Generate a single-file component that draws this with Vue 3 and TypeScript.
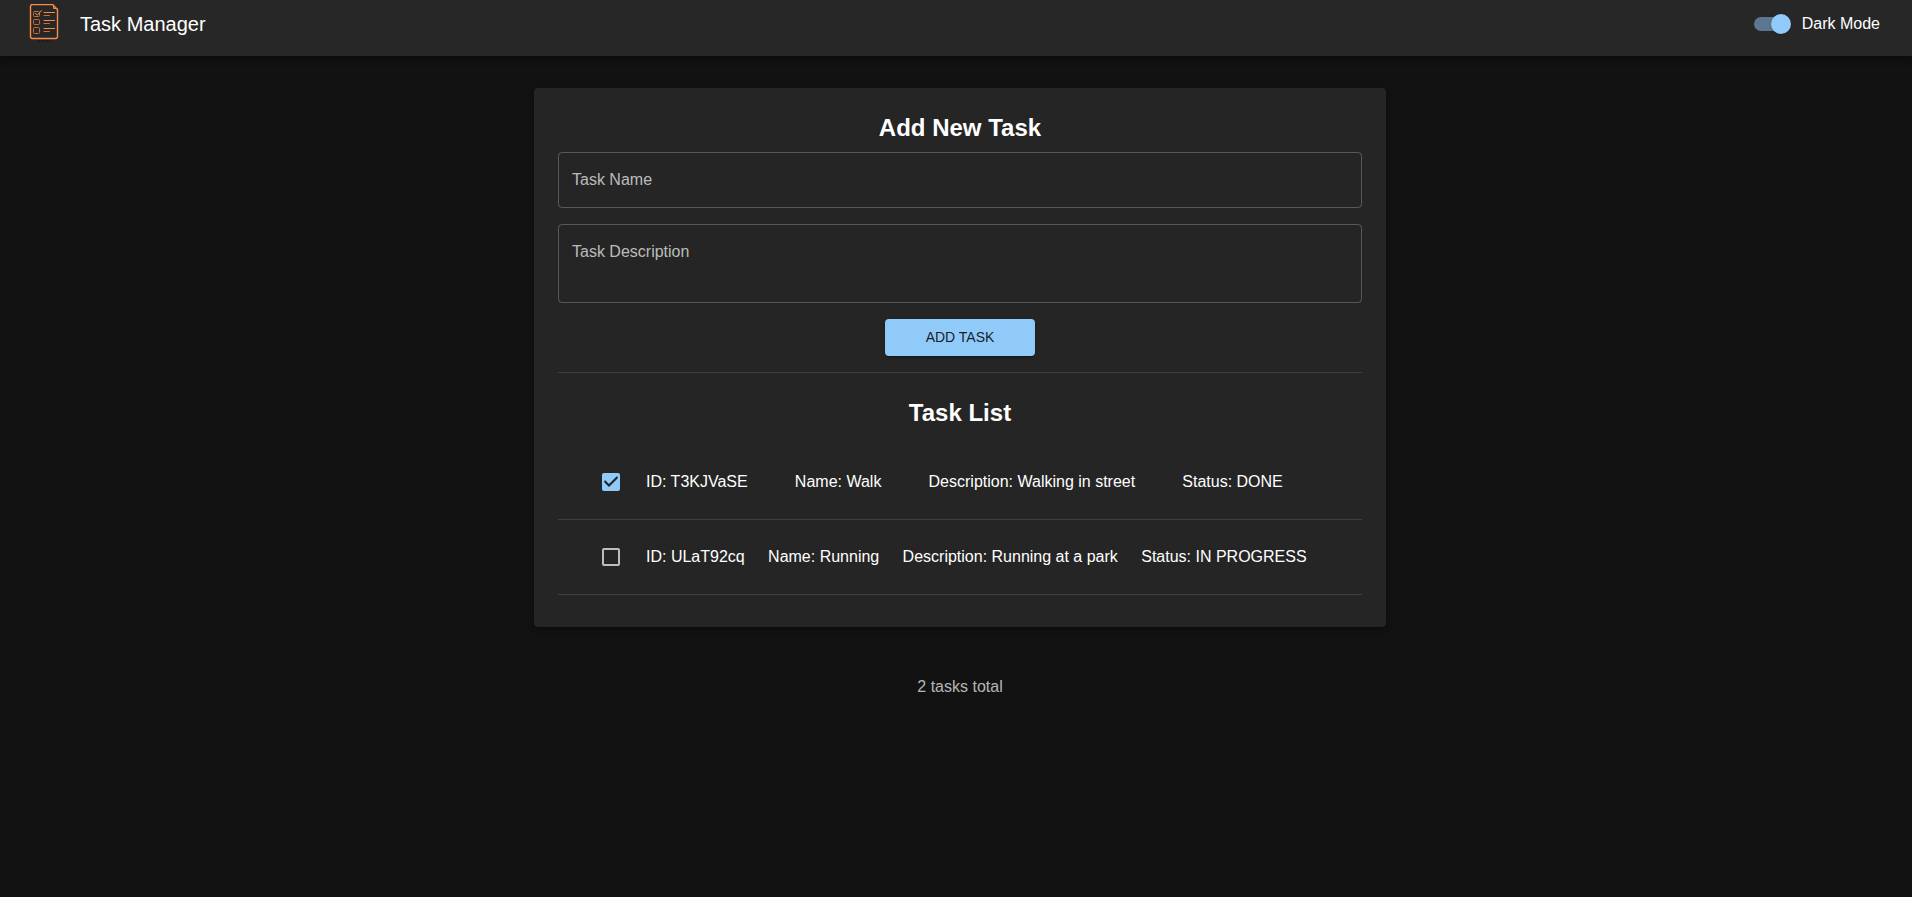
<script setup lang="ts">
import { computed, ref } from 'vue'

interface Task {
  id: string
  name: string
  description: string
  done: boolean
}

const darkMode = ref(true)
const taskName = ref('')
const taskDescription = ref('')
const tasks = ref<Task[]>([
  { id: 'T3KJVaSE', name: 'Walk', description: 'Walking in street', done: true },
  { id: 'ULaT92cq', name: 'Running', description: 'Running at a park', done: false },
])

const total = computed(() => `${tasks.value.length} tasks total`)

function addTask(): void {
  const name = taskName.value.trim()
  if (!name) return
  tasks.value.push({
    id: Math.random().toString(36).slice(2, 10),
    name,
    description: taskDescription.value.trim(),
    done: false,
  })
  taskName.value = ''
  taskDescription.value = ''
}
</script>

<template>
  <div class="app" :class="{ light: !darkMode }">
    <header class="bar">
      <svg class="logo" viewBox="0 2 32 40" width="32" height="40" fill="none" aria-hidden="true">
        <g stroke="#f98b48" stroke-linecap="round" stroke-linejoin="round">
          <path stroke-width="1.4" d="M4.5 2.5H24.5L29.5 7.5V34.5Q29.5 36.5 27.5 36.5H4.5Q2.5 36.5 2.5 34.5V4.5Q2.5 2.5 4.5 2.5Z" />
          <path d="M25.5 3V6.5H29" />
          <g stroke="#c96b38">
            <rect x="5.5" y="9.5" width="6" height="5" rx="1" />
            <rect x="5.5" y="17.5" width="6" height="5" rx="1" />
            <rect x="5.5" y="25.5" width="6" height="6" rx="1" />
            <path d="M16 13.5H21.5M16 21.5H21.5M16 29.5H21.5" />
          </g>
          <path d="M7.5 11.5L9.5 13L13.5 8.5M16 10.5H26.5M16 18.5H26.5M16 26.5H26.5" />
        </g>
        <path d="M9 39H23" stroke="#151515" stroke-dasharray="3 1" />
      </svg>
      <h1 class="title">Task Manager</h1>
      <label class="mode">
        <input v-model="darkMode" class="switch" type="checkbox" role="switch" />
        <span>Dark Mode</span>
      </label>
    </header>

    <main class="content">
      <section class="card">
        <h2 class="heading">Add New Task</h2>
        <form class="form" @submit.prevent="addTask">
          <div class="field">
            <input id="task-name" v-model="taskName" class="control" type="text" />
            <label v-show="!taskName" class="hint" for="task-name">Task Name</label>
          </div>
          <div class="field">
            <textarea id="task-description" v-model="taskDescription" class="control area" rows="2"></textarea>
            <label v-show="!taskDescription" class="hint" for="task-description">Task Description</label>
          </div>
          <button class="add" type="submit">ADD TASK</button>
        </form>
        <hr class="rule" />
        <h2 class="heading">Task List</h2>
        <ul class="list">
          <li v-for="task in tasks" :key="task.id" class="row">
            <input :id="`done-${task.id}`" v-model="task.done" class="check" type="checkbox" />
            <label class="details" :for="`done-${task.id}`">
              <span>ID: {{ task.id }}</span>
              <span>Name: {{ task.name }}</span>
              <span>Description: {{ task.description }}</span>
              <span>Status: {{ task.done ? 'DONE' : 'IN PROGRESS' }}</span>
            </label>
          </li>
        </ul>
      </section>
      <p class="total">{{ total }}</p>
    </main>
  </div>
</template>

<style>
body {
  margin: 0;
  background: #121212;
}
</style>

<style scoped>
.app {
  --page: #121212;
  --bar: #272727;
  --card: #252525;
  --text: #fff;
  --muted: rgba(255, 255, 255, 0.7);
  --outline: rgba(255, 255, 255, 0.23);
  --divider: rgba(255, 255, 255, 0.12);
  --accent: #90caf9;
  --on-accent: rgba(0, 0, 0, 0.87);
  min-height: 100vh;
  background: var(--page);
  color: var(--text);
  font: 16px/24px "Liberation Sans", Arial, sans-serif;
}

.app.light {
  --page: #fff;
  --bar: #1976d2;
  --card: #fff;
  --text: #212121;
  --muted: rgba(0, 0, 0, 0.6);
  --outline: rgba(0, 0, 0, 0.23);
  --divider: rgba(0, 0, 0, 0.12);
}

.app *,
.app {
  box-sizing: border-box;
}

.bar {
  display: flex;
  align-items: center;
  min-height: 56px;
  padding: 0 32px 8px 28px;
  background: var(--bar);
  box-shadow: 0 2px 4px -1px rgba(0, 0, 0, 0.2), 0 4px 5px rgba(0, 0, 0, 0.14), 0 1px 10px rgba(0, 0, 0, 0.12);
  color: #fff;
}

.logo {
  flex: none;
  margin-right: 20px;
}

.title {
  flex: 1;
  margin: 0;
  font-size: 20px;
  font-weight: 500;
  line-height: 32px;
}

.mode {
  display: flex;
  align-items: center;
  gap: 14px;
  cursor: pointer;
}

.switch {
  appearance: none;
  display: flex;
  align-items: center;
  width: 34px;
  height: 14px;
  margin: 0;
  border-radius: 7px;
  background: rgba(255, 255, 255, 0.3);
  cursor: pointer;
}

.switch::before {
  content: "";
  flex: none;
  width: 20px;
  height: 20px;
  margin-left: -3px;
  border-radius: 50%;
  background: #e0e0e0;
  box-shadow: 0 1px 3px rgba(0, 0, 0, 0.2);
}

.switch:checked {
  background: rgba(144, 202, 249, 0.5);
}

.switch:checked::before {
  margin-left: 17px;
  background: var(--accent);
}

.content {
  display: flex;
  flex-direction: column;
  align-items: center;
  padding: 32px 0 24px 8px;
}

.card {
  width: 100%;
  max-width: 852px;
  padding: 24px;
  border-radius: 4px;
  background: var(--card);
  box-shadow: 0 3px 3px -2px rgba(0, 0, 0, 0.2), 0 3px 4px rgba(0, 0, 0, 0.14), 0 1px 8px rgba(0, 0, 0, 0.12);
}

.heading {
  margin: 0 0 8px;
  font-size: 24px;
  font-weight: 700;
  line-height: 32px;
  text-align: center;
}

.form {
  display: flex;
  flex-direction: column;
  align-items: center;
  gap: 16px;
}

.field {
  display: grid;
  width: 100%;
}

.control,
.hint {
  grid-area: 1 / 1;
}

.control {
  width: 100%;
  height: 56px;
  padding: 0 14px;
  border: 1px solid var(--outline);
  border-radius: 4px;
  outline: none;
  background: transparent;
  color: var(--text);
  font: inherit;
}

.control:focus {
  border-color: var(--accent);
}

.area {
  height: 79px;
  padding: 15px 14px;
  resize: none;
}

.hint {
  align-self: start;
  justify-self: start;
  margin: 16px 14px;
  color: var(--muted);
  pointer-events: none;
}

.add {
  width: 150px;
  padding: 6px 16px;
  border: 0;
  border-radius: 4px;
  background: var(--accent);
  box-shadow: 0 3px 1px -2px rgba(0, 0, 0, 0.2), 0 2px 2px rgba(0, 0, 0, 0.14), 0 1px 5px rgba(0, 0, 0, 0.12);
  color: var(--on-accent);
  font: 500 14px/25px "Liberation Sans", Arial, sans-serif;
  cursor: pointer;
}

.rule {
  width: 100%;
  height: 1px;
  margin: 16px 0 24px;
  border: 0;
  background: var(--divider);
}

.list {
  margin: 0;
  padding: 8px 0;
  list-style: none;
}

.row {
  display: flex;
  align-items: center;
  padding: 25px 32px;
  border-bottom: 1px solid var(--divider);
}

.check {
  appearance: none;
  display: grid;
  flex: none;
  place-items: center;
  width: 18px;
  height: 18px;
  margin: 0 26px 0 12px;
  border: 2px solid var(--muted);
  border-radius: 2px;
  cursor: pointer;
}

.check:checked {
  border-color: var(--accent);
  background: var(--accent);
}

.check:checked::before {
  content: "";
  width: 14px;
  height: 14px;
  background: var(--card);
  clip-path: polygon(5px 9px, 13px 1px, 14px 3px, 5px 12px, 0 7px, 1px 5px);
}

.details {
  display: flex;
  flex: 1;
}

.details span {
  margin-right: auto;
}

.total {
  margin: 48px 0 0;
  color: var(--muted);
}
</style>
